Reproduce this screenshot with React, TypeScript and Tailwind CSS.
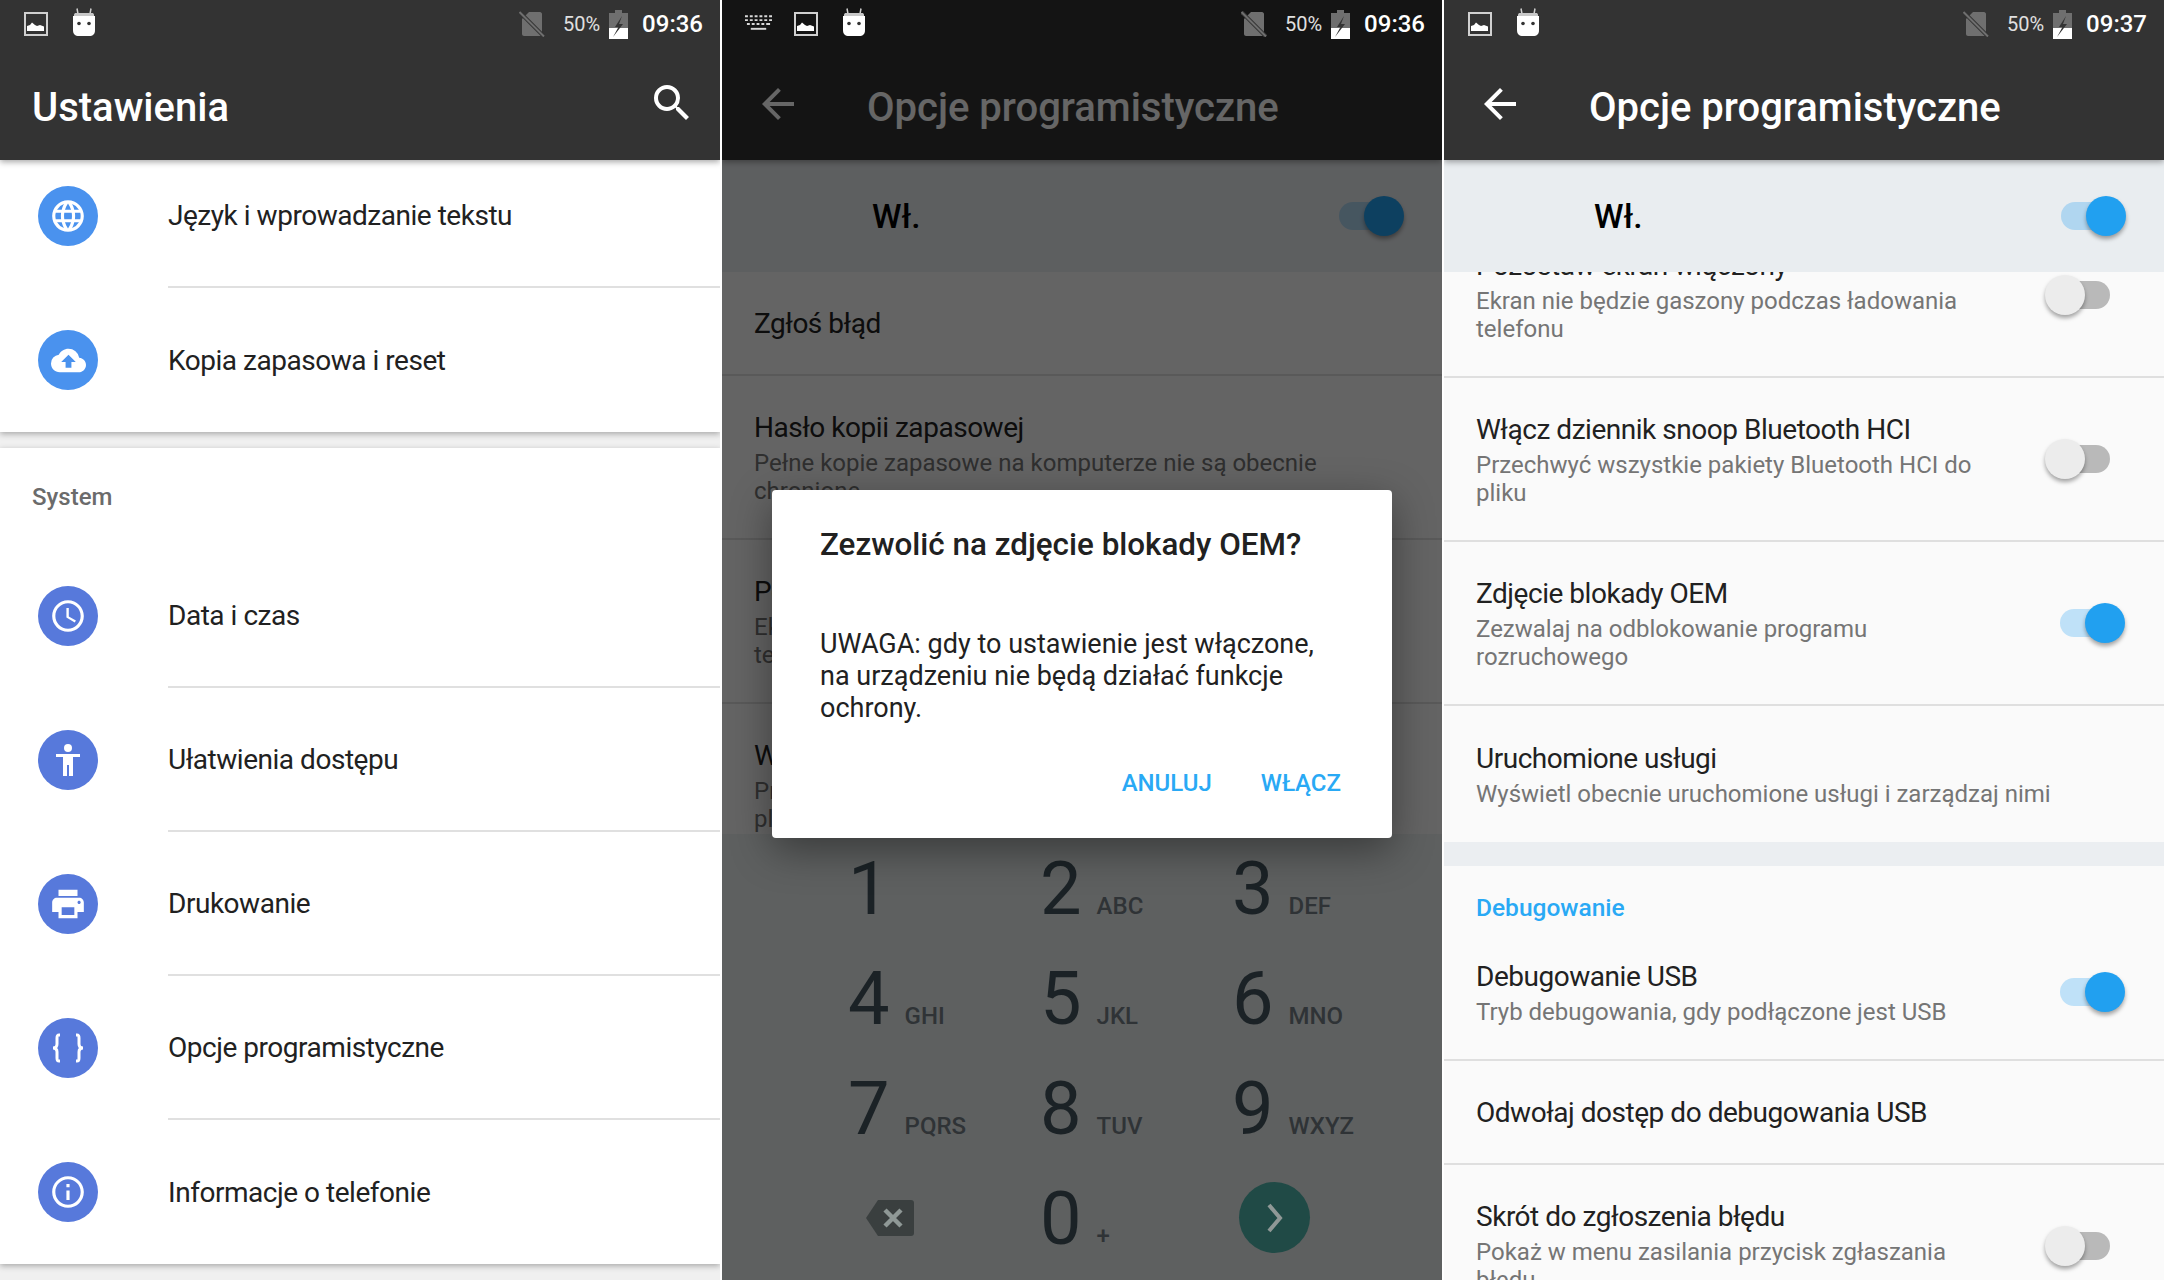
import { ReactNode } from "react";
import {
  MdAccessTime,
  MdArrowBack,
  MdCloudUpload,
  MdInfoOutline,
  MdLanguage,
  MdPrint,
  MdSearch,
} from "react-icons/md";

const ImageNotification = () => (
  <svg width="24" height="24" viewBox="0 0 24 24">
    <rect x="1" y="1" width="22" height="22" fill="none" stroke="#d0d0d0" strokeWidth="2" />
    <path d="M3 19v-5l3-1 2-2.500 3 2.500 2 1 3-1 4 1.500V19z" fill="#fff" />
  </svg>
);

const AndroidHead = () => (
  <svg width="22" height="28" viewBox="0 0 22 28" className="-translate-y-[2px]">
    <path d="M5 6 4 0.500M17 6l1-5.500" stroke="#d0d0d0" strokeWidth="1.500" />
    <path d="M1 7c0-1.500 1-2 2-2h16c1 0 2 .5 2 2v1H1z" fill="#c8c8c8" />
    <path d="M0 8h22v14c0 4-2 6-6 6H6c-4 0-6-2-6-6z" fill="#fff" />
    <circle cx="6" cy="15.500" r="1.800" fill="#333" />
    <circle cx="16" cy="15.500" r="1.800" fill="#333" />
  </svg>
);

const KeyboardIcon = () => (
  <svg width="27" height="20" viewBox="0 0 28 20" fill="#d8d8d8" className="-mr-[3px]">
    <path d="M0 1h3v2H0zM5 1h3v2H5zM10 1h3v2h-3zM15 1h3v2h-3zM20 1h3v2h-3zM25 1h3v2h-3z" />
    <path d="M0 5h3v2H0zM5 5h3v2H5zM10 5h3v2h-3zM15 5h3v2h-3zM20 5h3v2h-3zM25 5h3v2h-3z" />
    <path d="M2 9h3v2H2zM7 9h3v2H7zM12 9h3v2h-3zM17 9h3v2h-3zM22 9h4v2h-4z" />
    <path d="M6 14h16v2H6z" />
  </svg>
);

const SimOffIcon = () => (
  <svg width="26" height="26" viewBox="0 0 26 26">
    <path d="M10 1h11c1 0 2 1 2 2v20c0 1-1 2-2 2H5c-1 0-2-1-2-2V8z" fill="#6f6f6f" />
    <path d="M0.500 1 25 25.500" stroke="#333" strokeWidth="4" />
    <path d="M0.500 1 25 25.500" stroke="#6f6f6f" strokeWidth="2" />
  </svg>
);

const BatteryIcon = () => (
  <svg width="19" height="29" viewBox="0 0 19 29">
    <path d="M6 0h7v3h6v26H0V3h6z" fill="#6f6f6f" />
    <path d="M0 18h19v11H0z" fill="#fff" />
    <path d="M13 6 6 17h3.500L4 27l10-13h-4z" fill="#333" />
  </svg>
);

const StatusBar = ({ time, dark, keyboard }: { time: string; dark?: boolean; keyboard?: boolean }) => (
  <div className={`relative z-20 flex h-12 items-center ${dark ? "bg-[#141414]" : "bg-[#333333]"}`}>
    <div className={`flex items-center gap-[25px] ${keyboard ? "pl-[23px]" : "pl-6"}`}>
      {keyboard && <KeyboardIcon />}
      <ImageNotification />
      <AndroidHead />
    </div>
    <div className="ml-auto flex items-center pr-[17px]">
      <SimOffIcon />
      <span className="ml-[18px] text-[20px] text-[#e0e0e0]">50%</span>
      <span className="ml-[9px]">
        <BatteryIcon />
      </span>
      <span className="ml-[14px] text-[24px] font-medium text-white">{time}</span>
    </div>
  </div>
);

const Toggle = ({ on, dim }: { on?: boolean; dim?: boolean }) => (
  <div
    className={`relative h-7 w-[50px] rounded-full ${
      on ? (dim ? "bg-[#b0d6f0]" : "bg-[#bfe1f8]") : "bg-[#b9b9b9]"
    }`}
  >
    <div
      className={`absolute top-[-6px] h-10 w-10 rounded-full shadow-[0_3px_4px_rgba(0,0,0,0.35)] ${
        on ? "left-[25px] bg-[#21a0f0]" : "left-[-15px] bg-[#ececec]"
      }`}
    />
  </div>
);

const AppBar = ({ title, back }: { title: string; back?: boolean }) => (
  <div className="relative z-[5] flex h-28 items-center bg-[#333333] pt-2 text-white shadow-[0_2px_6px_rgba(0,0,0,0.35)]">
    {back ? (
      <>
        <MdArrowBack size={48} className="ml-8 shrink-0 -translate-y-[4px]" />
        <span className="ml-[65px] text-[40px] font-medium leading-none">{title}</span>
      </>
    ) : (
      <>
        <span className="ml-8 text-[40px] font-medium leading-none">{title}</span>
        <MdSearch size={48} className="ml-auto mr-6 -translate-y-[5px]" />
      </>
    )}
  </div>
);

const SwitchBar = () => (
  <div className="relative z-[2] flex h-28 shrink-0 items-center bg-[#e9edf0] pl-[150px] pr-[53px]">
    <span className="pt-[2px] text-[33.500px] font-medium text-black">Wł.</span>
    <div className="ml-auto">
      <Toggle on dim />
    </div>
  </div>
);

type Setting = { title: string; sub?: string[]; toggle?: "on" | "off"; last?: boolean };

const Row = ({ title, sub, toggle, last }: Setting) => (
  <div
    className={`flex items-center justify-between pl-8 pr-[54px] ${
      last ? "" : "border-b-2 border-[#dfdfdf]"
    } ${sub ? (sub.length > 1 ? "h-[164px]" : "h-[136px]") : "h-[104px] pt-[2px]"}`}
  >
    <div>
      <div className="text-[28px] leading-9 tracking-[-0.47px] text-[#212121]">{title}</div>
      {sub && (
        <div className="mt-[3px] text-[24px] leading-7 text-[#757575]">
          {sub.map((line) => (
            <div key={line}>{line}</div>
          ))}
        </div>
      )}
    </div>
    {toggle && (
      <div className="shrink-0">
        <Toggle on={toggle === "on"} />
      </div>
    )}
  </div>
);

const screenOn: Setting = {
  title: "Pozostaw ekran włączony",
  sub: ["Ekran nie będzie gaszony podczas ładowania", "telefonu"],
  toggle: "off",
};
const snoop: Setting = {
  title: "Włącz dziennik snoop Bluetooth HCI",
  sub: ["Przechwyć wszystkie pakiety Bluetooth HCI do", "pliku"],
  toggle: "off",
};

const CircleIcon = ({ color, children }: { color: string; children: ReactNode }) => (
  <div
    className={`flex h-[60px] w-[60px] shrink-0 items-center justify-center rounded-full text-white ${color}`}
  >
    {children}
  </div>
);

const MenuRow = ({ label, color, icon }: { label: string; color: string; icon: ReactNode }) => (
  <div className="flex h-36 items-center pl-[38px]">
    <CircleIcon color={color}>{icon}</CircleIcon>
    <div className="ml-[70px] flex h-full flex-1 items-center border-b-2 border-[#e0e0e0] pt-[2px] text-[28px] tracking-[-0.47px] text-[#212121]">
      {label}
    </div>
  </div>
);

const AccessibilityIcon = () => (
  <svg width="24" height="32" viewBox="0 0 24 32" fill="#fff">
    <circle cx="12" cy="4" r="4" />
    <path d="M0 10h24v3h-7v19h-4V21h-2v11H7V13H0z" />
  </svg>
);

const BracesIcon = () => (
  <svg width="34" height="30" viewBox="0 0 34 30" fill="none" stroke="#fff" strokeWidth="3">
    <path d="M9 2H8C6 2 6 3 6 5v6c0 2-1 4-4 4 3 0 4 2 4 4v6c0 2 0 3 2 3h1" />
    <path d="M25 2h1c2 0 2 1 2 3v6c0 2 1 4 4 4-3 0-4 2-4 4v6c0 2 0 3-2 3h-1" />
  </svg>
);

function SettingsScreen() {
  const blue = "bg-[#4a92ee]";
  const indigo = "bg-[#5779db]";
  return (
    <div className="flex h-full flex-col">
      <StatusBar time="09:36" />
      <AppBar title="Ustawienia" />
      <div className="flex-1 overflow-hidden bg-[#f0f0f0]">
        <div className="-mt-4 bg-white shadow-[0_2px_6px_rgba(0,0,0,0.3)]">
          <MenuRow label="Język i wprowadzanie tekstu" color={blue} icon={<MdLanguage size={38} />} />
          <div className="flex h-36 items-center pl-[38px]">
            <CircleIcon color={blue}>
              <MdCloudUpload size={35} />
            </CircleIcon>
            <div className="ml-[70px] pt-[2px] text-[28px] tracking-[-0.47px] text-[#212121]">
              Kopia zapasowa i reset
            </div>
          </div>
        </div>
        <div className="mt-4 bg-white shadow-[0_2px_6px_rgba(0,0,0,0.3)]">
          <div className="flex h-24 items-start pl-8 pt-[34px] text-[24px] font-medium leading-[30px] text-[#6b6b6b]">
            System
          </div>
          <MenuRow label="Data i czas" color={indigo} icon={<MdAccessTime size={38} />} />
          <MenuRow label="Ułatwienia dostępu" color={indigo} icon={<AccessibilityIcon />} />
          <MenuRow label="Drukowanie" color={indigo} icon={<MdPrint size={38} />} />
          <MenuRow label="Opcje programistyczne" color={indigo} icon={<BracesIcon />} />
          <div className="flex h-36 items-center pl-[38px]">
            <CircleIcon color={indigo}>
              <MdInfoOutline size={38} />
            </CircleIcon>
            <div className="ml-[70px] pt-[2px] text-[28px] tracking-[-0.47px] text-[#212121]">
              Informacje o telefonie
            </div>
          </div>
        </div>
      </div>
    </div>
  );
}

const keys = [
  ["1", ""],
  ["2", "ABC"],
  ["3", "DEF"],
  ["4", "GHI"],
  ["5", "JKL"],
  ["6", "MNO"],
  ["7", "PQRS"],
  ["8", "TUV"],
  ["9", "WXYZ"],
];

const Key = ({ digit, letters }: { digit: string; letters: string }) => (
  <div className="flex items-baseline gap-[15px]">
    <span className="text-[74px] font-normal leading-[110px] text-[#1b2226]">{digit}</span>
    <span className="text-[24px] font-medium text-[#2f3336]">{letters}</span>
  </div>
);

function Keypad() {
  return (
    <div className="relative z-20 grid h-[446px] auto-rows-[110px] grid-cols-[192px_192px_192px] content-start bg-[#5e6060] pl-[126px]">
      {keys.map(([digit, letters]) => (
        <Key key={digit} digit={digit} letters={letters} />
      ))}
      <div className="flex items-center pb-[3px] pl-[18px]">
        <svg width="48" height="36" viewBox="0 0 48 36">
          <path d="M12 0h33c2 0 3 1 3 3v30c0 2-1 3-3 3H12L0 18z" fill="#3a3f3f" />
          <path d="M19 10l16 16M35 10 19 26" stroke="#8f9896" strokeWidth="4.500" />
        </svg>
      </div>
      <Key digit="0" letters="+" />
      <div className="flex items-center pb-[3px] pl-[7px]">
        <div className="flex h-[71px] w-[71px] items-center justify-center rounded-full bg-[#204a46]">
          <svg width="16" height="30" viewBox="0 0 16 30" fill="none">
            <path d="M2 2l11 13L2 28" stroke="#8f9896" strokeWidth="4" />
          </svg>
        </div>
      </div>
    </div>
  );
}

function ConfirmDialog() {
  return (
    <div className="absolute left-[50px] top-[490px] z-30 flex h-[348px] w-[620px] flex-col rounded bg-white pl-[48px] shadow-[0_12px_40px_rgba(0,0,0,0.4)]">
      <div className="mt-[37px] text-[31.400px] font-medium leading-9 text-[#212121]">
        Zezwolić na zdjęcie blokady OEM?
      </div>
      <div className="mt-[65px] text-[27px] leading-8 text-[#212121]">
        <div>UWAGA: gdy to ustawienie jest włączone,</div>
        <div>na urządzeniu nie będą działać funkcje</div>
        <div>ochrony.</div>
      </div>
      <div className="mt-[43px] flex justify-end gap-[49px] pr-[51px] text-[24px] font-medium leading-8 text-[#29a9f5]">
        <span>ANULUJ</span>
        <span>WŁĄCZ</span>
      </div>
    </div>
  );
}

function OemPromptScreen() {
  return (
    <div className="relative flex h-full flex-col">
      <StatusBar time="09:36" dark keyboard />
      <AppBar title="Opcje programistyczne" back />
      <SwitchBar />
      <div className="h-[562px] overflow-hidden bg-[#fafafa]">
        <Row title="Zgłoś błąd" />
        <Row
          title="Hasło kopii zapasowej"
          sub={["Pełne kopie zapasowe na komputerze nie są obecnie", "chronione"]}
        />
        <Row {...screenOn} />
        <Row {...snoop} />
      </div>
      <Keypad />
      <div className="absolute inset-0 z-10 bg-black/60" />
      <ConfirmDialog />
    </div>
  );
}

function DeveloperOptionsScreen() {
  return (
    <div className="flex h-full flex-col">
      <StatusBar time="09:37" />
      <AppBar title="Opcje programistyczne" back />
      <SwitchBar />
      <div className="flex-1 overflow-hidden bg-[#fafafa]">
        <div className="-mt-[58px]">
          <Row {...screenOn} />
          <Row {...snoop} />
          <Row
            title="Zdjęcie blokady OEM"
            sub={["Zezwalaj na odblokowanie programu", "rozruchowego"]}
            toggle="on"
          />
          <Row
            title="Uruchomione usługi"
            sub={["Wyświetl obecnie uruchomione usługi i zarządzaj nimi"]}
            last
          />
          <div className="h-6 bg-[#ebeef1]" />
          <div className="flex h-[59px] items-end pb-[2px] pl-8 text-[24.500px] font-medium leading-[30px] text-[#29a9f5]">
            Debugowanie
          </div>
          <Row
            title="Debugowanie USB"
            sub={["Tryb debugowania, gdy podłączone jest USB"]}
            toggle="on"
          />
          <Row title="Odwołaj dostęp do debugowania USB" />
          <Row
            title="Skrót do zgłoszenia błędu"
            sub={["Pokaż w menu zasilania przycisk zgłaszania", "błędu"]}
            toggle="off"
          />
        </div>
      </div>
    </div>
  );
}

export default function App() {
  return (
    <div className="flex h-[1280px] w-[2164px] gap-[2px] overflow-hidden bg-white font-[family-name:Roboto,sans-serif]">
      <div className="h-full w-[720px] overflow-hidden">
        <SettingsScreen />
      </div>
      <div className="h-full w-[720px] overflow-hidden">
        <OemPromptScreen />
      </div>
      <div className="h-full w-[720px] overflow-hidden">
        <DeveloperOptionsScreen />
      </div>
    </div>
  );
}
